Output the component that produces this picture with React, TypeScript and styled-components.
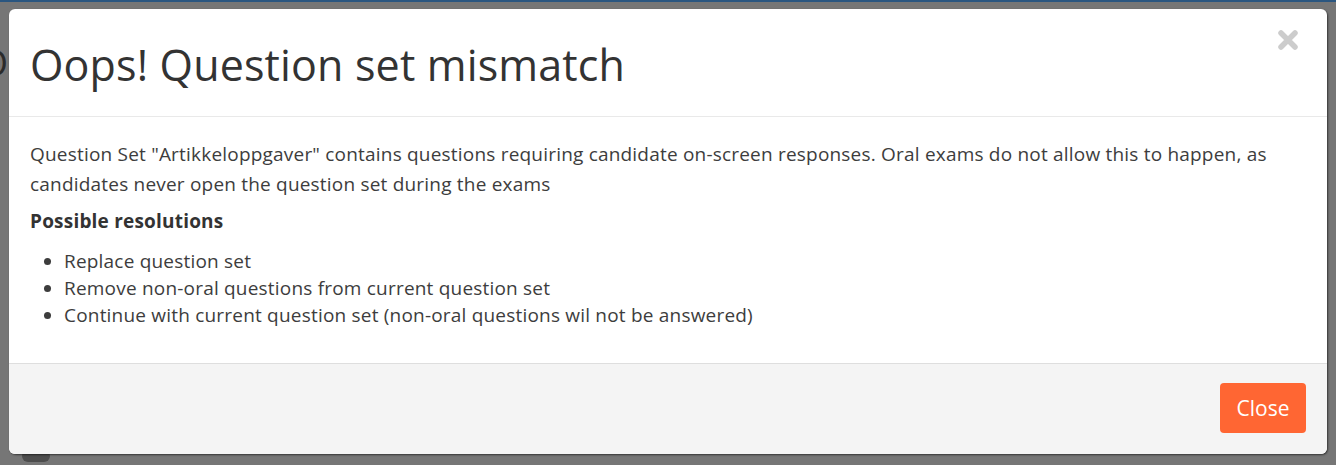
import React from "react";
import styled, { createGlobalStyle } from "styled-components";

const Global = createGlobalStyle`
  html, body { margin: 0; padding: 0; }
  body {
    width: 1336px;
    height: 465px;
    overflow: hidden;
    background: #767676;
    font-family: "Open Sans", "Liberation Sans", sans-serif;
  }
`;

const Backdrop = styled.div`
  position: relative;
  width: 1336px;
  height: 465px;
  background: #767676;
  border-top: 2px solid #2a5680;
  box-sizing: border-box;
  padding: 7px 9px 0 9px;
`;

const BgGlyph = styled.span`
  position: absolute;
  left: -20px;
  top: 36px;
  font-size: 36px;
  color: #2b2b2b;
  font-family: "Open Sans", sans-serif;
`;

const BgChip = styled.div`
  position: absolute;
  left: 22px;
  top: 448px;
  width: 28px;
  height: 12px;
  border-radius: 6px;
  background: #4d4d4d;
`;

const Modal = styled.div`
  position: relative;
  width: 1318px;
  height: 445px;
  background: #fff;
  border-radius: 6px;
  box-shadow: 1px 1px 2px rgba(0, 0, 0, 0.55);
  display: flex;
  flex-direction: column;
  overflow: hidden;
`;

const Header = styled.div`
  height: 108px;
  box-sizing: border-box;
  border-bottom: 1px solid #e9e9e9;
  padding: 0 21px;
  display: flex;
  align-items: center;
  justify-content: space-between;
`;

const Title = styled.h1`
  margin: 0;
  font-size: 43px;
  font-weight: 400;
  letter-spacing: 0.15px;
  color: #333;
  line-height: 1;
  padding-top: 4px;
`;

const CloseX = styled.button`
  align-self: flex-start;
  margin-top: 20px;
  margin-right: 7px;
  border: 0;
  background: transparent;
  padding: 0;
  width: 22px;
  height: 22px;
  cursor: pointer;
`;

const Body = styled.div`
  flex: 1;
  padding: 22px 21px 0 21px;
  color: #3d3d3d;
  font-size: 19px;
  letter-spacing: 0.2px;
`;

const Para = styled.p`
  margin: 0;
  line-height: 30px;
`;

const SubHead = styled.h4`
  margin: 7px 0 0 0;
  font-size: 19px;
  font-weight: 700;
  line-height: 30px;
  color: #333;
`;

const List = styled.ul`
  margin: 12px 0 0 0;
  padding-left: 34px;
  line-height: 27px;
`;

const Footer = styled.div`
  height: 91px;
  box-sizing: border-box;
  border-top: 1px solid #dedede;
  background: #f4f4f4;
  display: flex;
  justify-content: flex-end;
  align-items: flex-start;
  padding: 19px 21px 0 0;
`;

const Button = styled.button`
  width: 86px;
  height: 50px;
  border: 0;
  border-radius: 4px;
  background: #ff6633;
  color: #fff;
  font-family: "Open Sans", "Liberation Sans", sans-serif;
  font-size: 21px;
  cursor: pointer;
`;

export default function App() {
  return (
    <>
      <Global />
      <Backdrop>
        <BgGlyph>O</BgGlyph>
        <BgChip />
        <Modal>
          <Header>
            <Title>Oops! Question set mismatch</Title>
            <CloseX aria-label="Close">
              <svg width="22" height="22" viewBox="0 0 22 22">
                <path
                  d="M4 4 L18 18 M18 4 L4 18"
                  stroke="#cccccc"
                  strokeWidth="5.5"
                  strokeLinecap="round"
                />
              </svg>
            </CloseX>
          </Header>
          <Body>
            <Para>
              Question Set "Artikkeloppgaver" contains questions requiring candidate on-screen responses. Oral exams do not allow this to happen, as candidates never open the question set during the exams
            </Para>
            <SubHead>Possible resolutions</SubHead>
            <List>
              <li>Replace question set</li>
              <li>Remove non-oral questions from current question set</li>
              <li>Continue with current question set (non-oral questions wil not be answered)</li>
            </List>
          </Body>
          <Footer>
            <Button>Close</Button>
          </Footer>
        </Modal>
      </Backdrop>
    </>
  );
}
